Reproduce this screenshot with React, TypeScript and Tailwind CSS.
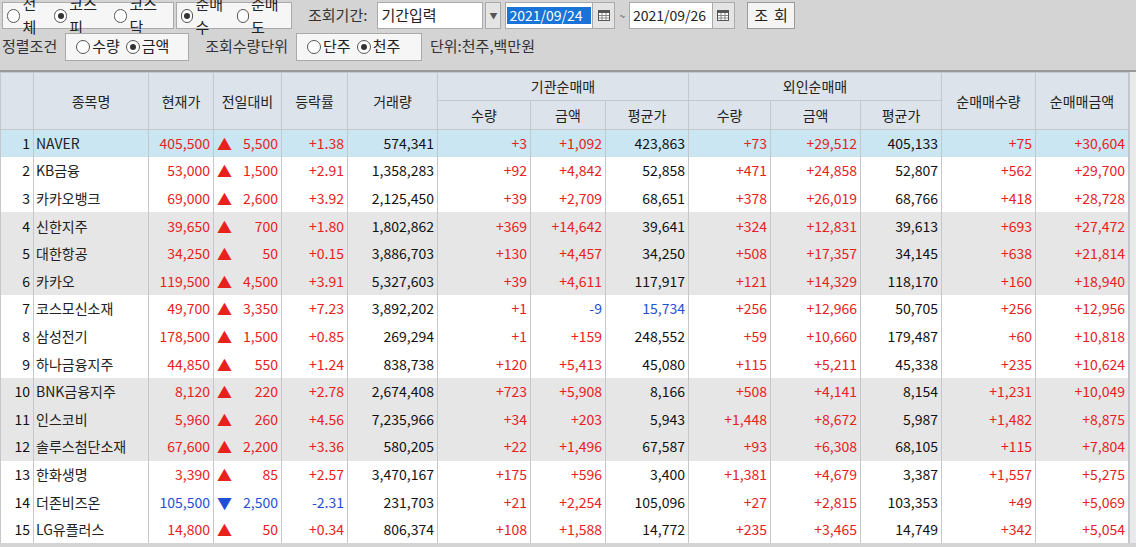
import React from 'react'

type Row = [string, string, string, string, string, string, string, string, string, string, string, string, string]

const rows: Row[] = [
  ['NAVER', '405,500', '5,500', '+1.38', '574,341', '+3', '+1,092', '423,863', '+73', '+29,512', '405,133', '+75', '+30,604'],
  ['KB금융', '53,000', '1,500', '+2.91', '1,358,283', '+92', '+4,842', '52,858', '+471', '+24,858', '52,807', '+562', '+29,700'],
  ['카카오뱅크', '69,000', '2,600', '+3.92', '2,125,450', '+39', '+2,709', '68,651', '+378', '+26,019', '68,766', '+418', '+28,728'],
  ['신한지주', '39,650', '700', '+1.80', '1,802,862', '+369', '+14,642', '39,641', '+324', '+12,831', '39,613', '+693', '+27,472'],
  ['대한항공', '34,250', '50', '+0.15', '3,886,703', '+130', '+4,457', '34,250', '+508', '+17,357', '34,145', '+638', '+21,814'],
  ['카카오', '119,500', '4,500', '+3.91', '5,327,603', '+39', '+4,611', '117,917', '+121', '+14,329', '118,170', '+160', '+18,940'],
  ['코스모신소재', '49,700', '3,350', '+7.23', '3,892,202', '+1', '-9', '15,734', '+256', '+12,966', '50,705', '+256', '+12,956'],
  ['삼성전기', '178,500', '1,500', '+0.85', '269,294', '+1', '+159', '248,552', '+59', '+10,660', '179,487', '+60', '+10,818'],
  ['하나금융지주', '44,850', '550', '+1.24', '838,738', '+120', '+5,413', '45,080', '+115', '+5,211', '45,338', '+235', '+10,624'],
  ['BNK금융지주', '8,120', '220', '+2.78', '2,674,408', '+723', '+5,908', '8,166', '+508', '+4,141', '8,154', '+1,231', '+10,049'],
  ['인스코비', '5,960', '260', '+4.56', '7,235,966', '+34', '+203', '5,943', '+1,448', '+8,672', '5,987', '+1,482', '+8,875'],
  ['솔루스첨단소재', '67,600', '2,200', '+3.36', '580,205', '+22', '+1,496', '67,587', '+93', '+6,308', '68,105', '+115', '+7,804'],
  ['한화생명', '3,390', '85', '+2.57', '3,470,167', '+175', '+596', '3,400', '+1,381', '+4,679', '3,387', '+1,557', '+5,275'],
  ['더존비즈온', '105,500', '2,500', '-2.31', '231,703', '+21', '+2,254', '105,096', '+27', '+2,815', '103,353', '+49', '+5,069'],
  ['LG유플러스', '14,800', '50', '+0.34', '806,374', '+108', '+1,588', '14,772', '+235', '+3,465', '14,749', '+342', '+5,054'],
]

const widths = [33, 115, 65, 68, 66, 90, 93, 75, 83, 82, 90, 81, 94, 93]

function Radio({ on, label }: { on?: boolean; label: string }) {
  return (
    <span className="flex items-center gap-[2px]">
      <span className="w-[14px] h-[14px] rounded-full border border-[#555] bg-white flex items-center justify-center">
        {on && <span className="w-[6px] h-[6px] rounded-full bg-[#333]" />}
      </span>
      <span>{label}</span>
    </span>
  )
}

function Cal() {
  return (
    <span className="w-[22px] h-full bg-[#e4e4e4] border-l border-[#aaa] flex items-center justify-center">
      <svg width="12" height="11" viewBox="0 0 12 11">
        <rect x="0.5" y="0.5" width="11" height="10" fill="#fff" stroke="#555" />
        <rect x="0.5" y="0.5" width="11" height="2.5" fill="#555" />
        <path d="M4 3v7M8 3v7M1 5.5h10M1 8h10" stroke="#888" strokeWidth="1" />
      </svg>
    </span>
  )
}

function color(v: string) {
  if (v.startsWith('-')) return 'text-[#1f4fd6]'
  return 'text-[#e8211d]'
}

export default function App() {
  return (
    <div className="w-[1136px] h-[547px] overflow-hidden bg-[#d4d4d4] text-[14px] text-[#222]" style={{ fontFamily: '"Noto Sans CJK KR", "Noto Sans", sans-serif' }}>
      {/* toolbar */}
      <div className="h-[30px] flex items-center gap-[2px] px-[2px] pt-[1px] text-[15px]">
        <div className="h-[27px] w-[172px] px-[4px] bg-[#f6f6f6] border border-[#aaa] flex items-center gap-[5px]">
          <Radio label="전체" /><Radio on label="코스피" /><Radio label="코스닥" />
        </div>
        <div className="h-[27px] w-[116px] px-[4px] bg-[#f6f6f6] border border-[#aaa] flex items-center gap-[5px]">
          <Radio on label="순매수" /><Radio label="순매도" />
        </div>
        <span className="ml-[14px] mr-[8px] text-[#333]">조회기간:</span>
        <div className="h-[27px] w-[106px] bg-white border border-[#aaa] flex items-center pl-[3px]">기간입력</div>
        <div className="h-[27px] w-[16px] bg-[#e4e4e4] border border-[#aaa] flex items-center justify-center text-[8px] text-[#555]">▼</div>
        <div className="h-[27px] ml-[2px] flex items-center bg-white border border-[#aaa]">
          <span className="px-[2px] mx-[1px] w-[84px] bg-[#1874d8] text-white text-[14px] leading-[17px]">2021/09/24</span>
          <Cal />
        </div>
        <span className="text-[10px] text-[#555] mx-[2px]">~</span>
        <div className="h-[27px] flex items-center bg-white border border-[#aaa]">
          <span className="px-[3px] w-[82px] text-[14px]">2021/09/26</span>
          <Cal />
        </div>
        <div className="ml-[10px] h-[27px] w-[48px] bg-[#f4f4f4] border border-[#999] flex items-center justify-center tracking-[6px] pl-[6px]">조회</div>
      </div>
      <div className="h-[33px] flex items-center px-[2px] text-[15px]">
        <span className="mr-[8px] text-[#333]">정렬조건</span>
        <div className="h-[28px] w-[124px] px-[10px] bg-[#f6f6f6] border border-[#aaa] flex items-center gap-[6px]">
          <Radio label="수량" /><Radio on label="금액" />
        </div>
        <span className="ml-[16px] mr-[8px] text-[#333]">조회수량단위</span>
        <div className="h-[28px] w-[126px] px-[10px] bg-[#f6f6f6] border border-[#aaa] flex items-center gap-[6px]">
          <Radio label="단주" /><Radio on label="천주" />
        </div>
        <span className="ml-[8px] text-[#333]">단위:천주,백만원</span>
      </div>
      <div className="h-[9px] border-b-2 border-[#9a9a9a]" />
      {/* grid */}
      <div className="flex">
        <table className="border-collapse table-fixed w-[1128px] text-[14px]">
          <colgroup>
            {widths.map((w, i) => <col key={i} style={{ width: w }} />)}
          </colgroup>
          <thead className="bg-[#dde3ea] text-[#222] font-normal">
            <tr className="h-[28px]">
              <th rowSpan={2} className="border border-[#c4c8cc] font-normal" />
              <th rowSpan={2} className="border border-[#c4c8cc] font-normal">종목명</th>
              <th rowSpan={2} className="border border-[#c4c8cc] font-normal">현재가</th>
              <th rowSpan={2} className="border border-[#c4c8cc] font-normal">전일대비</th>
              <th rowSpan={2} className="border border-[#c4c8cc] font-normal">등락률</th>
              <th rowSpan={2} className="border border-[#c4c8cc] font-normal">거래량</th>
              <th colSpan={3} className="border border-[#c4c8cc] font-normal">기관순매매</th>
              <th colSpan={3} className="border border-[#c4c8cc] font-normal">외인순매매</th>
              <th rowSpan={2} className="border border-[#c4c8cc] font-normal">순매매수량</th>
              <th rowSpan={2} className="border border-[#c4c8cc] font-normal">순매매금액</th>
            </tr>
            <tr className="h-[29px]">
              {['수량', '금액', '평균가', '수량', '금액', '평균가'].map((t, i) => (
                <th key={i} className="border border-[#c4c8cc] font-normal">{t}</th>
              ))}
            </tr>
          </thead>
          <tbody>
            {rows.map((r, i) => {
              const g = Math.floor(i / 3)
              const bg = i === 0 ? 'bg-[#c9e6f2]' : g % 2 === 1 ? 'bg-[#e6e6e6]' : 'bg-white'
              const down = r[3].startsWith('-')
              const c = down ? 'text-[#1f4fd6]' : 'text-[#e8211d]'
              const td = 'border-x border-[#c4c8cc] px-[3px] text-right whitespace-nowrap'
              return (
                <tr key={i} className={`h-[27.6px] ${bg}`}>
                  <td className={`${td} text-[#111]`}>{i + 1}</td>
                  <td className="border-x border-[#c4c8cc] px-[2px] text-left whitespace-nowrap">{r[0]}</td>
                  <td className={`${td} ${c}`}>{r[1]}</td>
                  <td className={`border-x border-[#c4c8cc] px-[3px] whitespace-nowrap ${c}`}>
                    <span className="flex justify-between items-center">
                      <span className="text-[15px] leading-none">{down ? '▼' : '▲'}</span>
                      <span>{r[2]}</span>
                    </span>
                  </td>
                  <td className={`${td} ${c}`}>{r[3]}</td>
                  <td className={`${td} text-[#111]`}>{r[4]}</td>
                  <td className={`${td} ${color(r[5])}`}>{r[5]}</td>
                  <td className={`${td} ${color(r[6])}`}>{r[6]}</td>
                  <td className={`${td} ${i === 6 ? 'text-[#1f4fd6]' : 'text-[#111]'}`}>{r[7]}</td>
                  <td className={`${td} ${color(r[8])}`}>{r[8]}</td>
                  <td className={`${td} ${color(r[9])}`}>{r[9]}</td>
                  <td className={`${td} text-[#111]`}>{r[10]}</td>
                  <td className={`${td} ${color(r[11])}`}>{r[11]}</td>
                  <td className={`${td} ${color(r[12])}`}>{r[12]}</td>
                </tr>
              )
            })}
          </tbody>
        </table>
        <div className="w-[8px] bg-[#eaeaea] border-l border-[#c4c8cc]" />
      </div>
    </div>
  )
}
